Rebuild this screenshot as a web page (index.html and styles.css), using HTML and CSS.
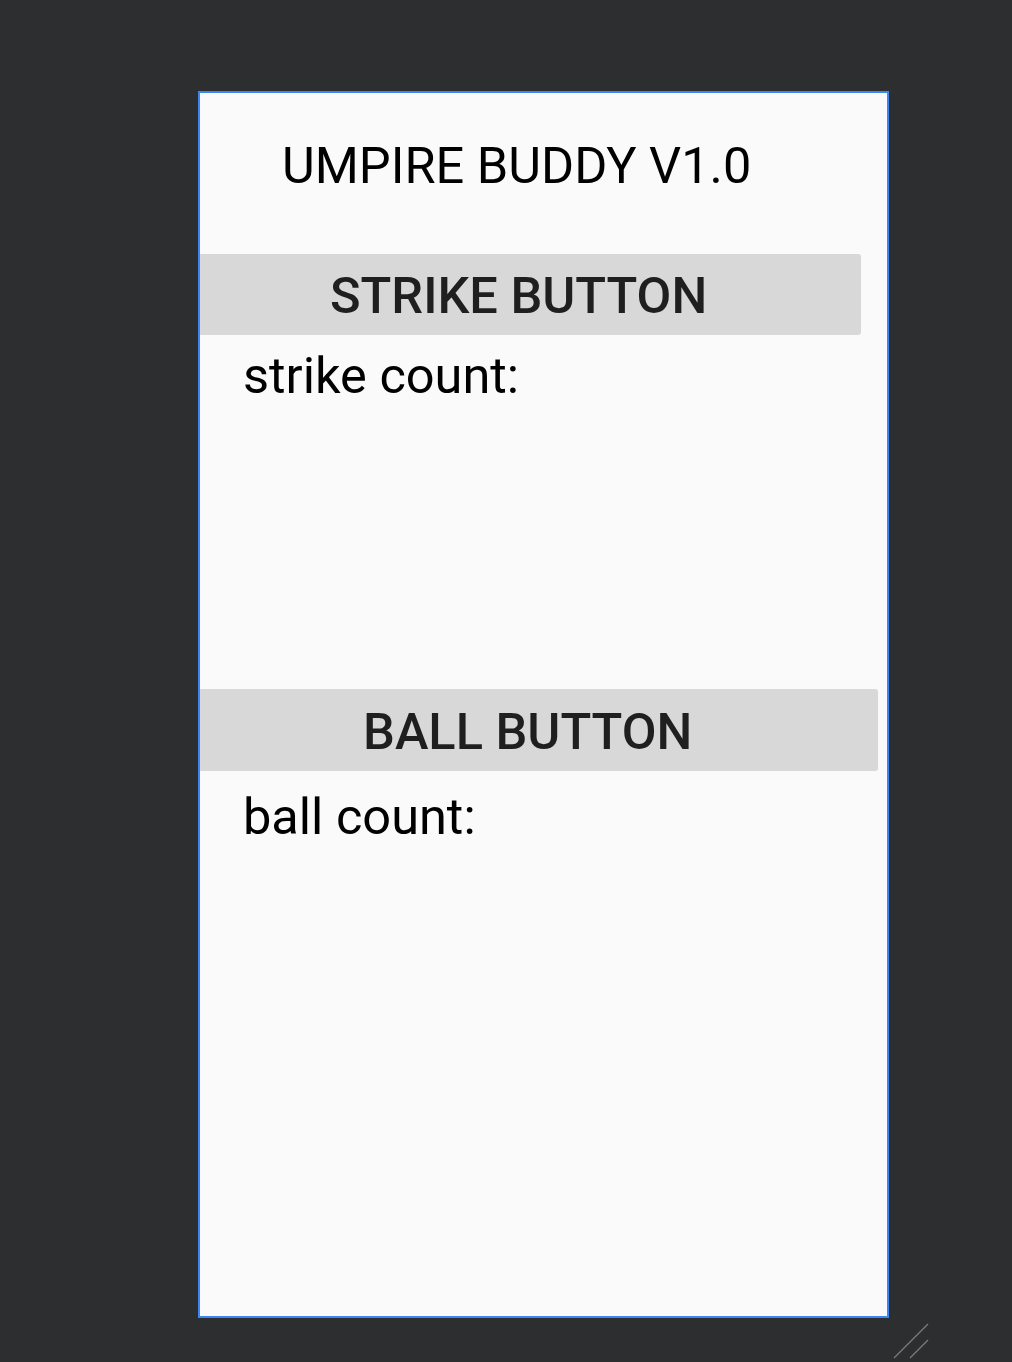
FILE: index.html
```html
<!DOCTYPE html>
<html>
<head>
<meta charset="utf-8">
<link rel="stylesheet" href="styles.css">
</head>
<body>
<div class="canvas">
  <div class="phone">
    <div class="title">UMPIRE BUDDY V1.0</div>
    <div class="btn btn-strike">STRIKE BUTTON</div>
    <div class="count count-strike">strike count:</div>
    <div class="btn btn-ball">BALL BUTTON</div>
    <div class="count count-ball">ball count:</div>
  </div>
  <svg class="grip" width="40" height="40" viewBox="0 0 40 40">
    <line x1="1" y1="37" x2="35" y2="3" stroke="#7a7b7c" stroke-width="1.2"/>
    <line x1="17" y1="37" x2="35" y2="19" stroke="#7a7b7c" stroke-width="1.2"/>
  </svg>
</div>
</body>
</html>
```

FILE: styles.css
```css
html, body {
  margin: 0;
  padding: 0;
  background: #2d2e30;
}
.canvas {
  position: relative;
  width: 1012px;
  height: 1362px;
  padding-top: 91px;
  padding-left: 198px;
  box-sizing: border-box;
}
.phone {
  width: 691px;
  height: 1227px;
  box-sizing: border-box;
  border: 2px solid #3d85f0;
  background: #fafafa;
  display: flex;
  flex-direction: column;
  align-items: flex-start;
  font-family: Roboto, "Liberation Sans", sans-serif;
  color: #000;
}
.title {
  margin-top: 44px;
  padding-left: 82px;
  font-size: 50.5px;
  line-height: 58px;
  font-weight: 400;
}
.btn {
  background: #d7d8d7;
  border-radius: 0 3px 3px 0;
  color: #1f1f1f;
  font-size: 50.5px;
  font-weight: 500;
  line-height: 78px;
  padding-top: 3px;
  box-sizing: border-box;
  height: 81px;
}
.btn-strike {
  margin-top: 59px;
  width: 661px;
  padding-left: 130px;
}
.btn-ball {
  margin-top: 284px;
  width: 678px;
  height: 82px;
  line-height: 79px;
  padding-left: 163px;
}
.count {
  padding-left: 43px;
  font-size: 50.5px;
  line-height: 58px;
}
.count-strike {
  margin-top: 12px;
}
.count-ball {
  margin-top: 17px;
}
.grip {
  position: absolute;
  left: 893px;
  top: 1321px;
}
```
